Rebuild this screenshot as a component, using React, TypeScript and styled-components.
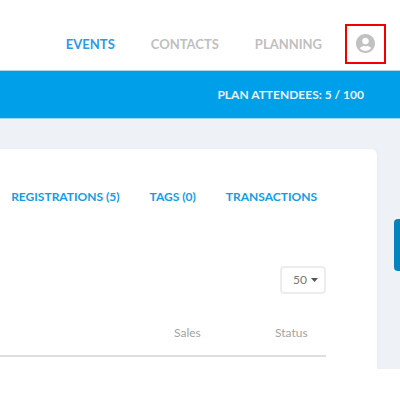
import React from "react";
import styled, { createGlobalStyle } from "styled-components";

const GlobalStyle = createGlobalStyle`
  *, *::before, *::after { box-sizing: border-box; }
  body {
    margin: 0;
    background: #ffffff;
    font-family: Lato, "Open Sans", sans-serif;
    font-size: 13px;
    overflow-x: hidden;
  }
`;

const Header = styled.header`
  display: flex;
  justify-content: flex-end;
  align-items: center;
  height: 71px;
  padding: 17px 14px 0 0;
  border-bottom: 1px solid #b5d5e6;
`;

const MainNav = styled.nav`
  display: flex;
  gap: 36px;
  margin-right: 23px;
`;

const NavLink = styled.a<{ $active?: boolean }>`
  color: ${(p) => (p.$active ? "#2d9ae6" : "#bfbfbf")};
  font-size: 13px;
  line-height: 16px;
  font-weight: 700;
  text-decoration: none;
  white-space: nowrap;
`;

const AccountButton = styled.button`
  display: flex;
  justify-content: center;
  align-items: center;
  width: 41px;
  height: 40px;
  padding: 0;
  border: 2px solid #f00000;
  background: #ffffff;
  color: #c1c1c1;
`;

const Banner = styled.div`
  display: flex;
  justify-content: flex-end;
  align-items: center;
  height: 48px;
  padding-right: 36px;
  border-bottom: 1px solid #9fd6f4;
  background: #009fe9;
  color: #e4f5fd;
  font-size: 12px;
  line-height: 16px;
  font-weight: 700;
`;

const Page = styled.main`
  display: flex;
  align-items: flex-start;
  padding-top: 30px;
  background: #eef2f7;
`;

const Card = styled.section`
  flex: 1;
  min-width: 0;
  padding: 40px 51px 12px 0;
  border-top-right-radius: 6px;
  background: #ffffff;
  box-shadow: 1px 0 3px #e6ebf2;
`;

const Tabs = styled.nav`
  display: flex;
  justify-content: flex-end;
  gap: 30px;
  padding-right: 9px;
`;

const TabLink = styled.a`
  color: #129de6;
  font-size: 12px;
  line-height: 16px;
  font-weight: 700;
  text-decoration: none;
  white-space: nowrap;
`;

const Toolbar = styled.div`
  display: flex;
  justify-content: flex-end;
  margin-top: 61px;
`;

const SelectBox = styled.div`
  position: relative;
  width: 46px;
  height: 28px;
`;

const PageSize = styled.select`
  appearance: none;
  width: 100%;
  height: 100%;
  padding: 0 0 0 11px;
  border: 2px solid #eceeee;
  border-radius: 4px;
  background: #ffffff;
  color: #777777;
  font: 400 12px/16px Lato, sans-serif;
`;

const Caret = styled.svg`
  position: absolute;
  top: 12px;
  right: 8px;
  pointer-events: none;
`;

const Table = styled.table`
  width: 100%;
  margin-top: 28px;
  border-collapse: collapse;
  table-layout: fixed;
`;

const HeadCell = styled.th<{ $width?: number }>`
  width: ${(p) => (p.$width ? `${p.$width}px` : "auto")};
  padding: 3px 0 14px;
  border-bottom: 2px solid #dfdfdf;
  color: #a3a3a3;
  font-size: 12px;
  line-height: 16px;
  font-weight: 400;
  text-align: left;
`;

const SideRail = styled.aside`
  display: flex;
  justify-content: flex-end;
  width: 23px;
  padding-top: 70px;
`;

const SideButton = styled.button`
  width: 6px;
  height: 52px;
  padding: 0;
  border: 0;
  border-radius: 4px 0 0 4px;
  background: #0484bf;
`;

export default function App() {
  return (
    <>
      <GlobalStyle />
      <Header>
        <MainNav aria-label="Main">
          <NavLink href="#events" $active>EVENTS</NavLink>
          <NavLink href="#contacts">CONTACTS</NavLink>
          <NavLink href="#planning">PLANNING</NavLink>
        </MainNav>
        <AccountButton type="button" aria-label="Account">
          <svg width="19" height="19" viewBox="0 0 496 496" aria-hidden="true">
            <path
              fill="currentColor"
              d="M248 0C111 0 0 111 0 248s111 248 248 248 248-111 248-248S385 0 248 0zm0 96c48.600 0 88 39.400 88 88s-39.400 88-88 88-88-39.400-88-88 39.400-88 88-88zm0 344c-58.700 0-111.300-26.600-146.500-68.200 18.800-35.400 55.600-59.800 98.500-59.800 2.400 0 4.800.4 7.100 1.100 13 4.200 26.600 6.900 40.900 6.900s28-2.700 40.900-6.900c2.300-.7 4.700-1.100 7.100-1.100 42.900 0 79.700 24.400 98.500 59.800C359.300 413.400 306.700 440 248 440z"
            />
          </svg>
        </AccountButton>
      </Header>
      <Banner>PLAN ATTENDEES: 5 / 100</Banner>
      <Page>
        <Card>
          <Tabs aria-label="Event sections">
            <TabLink href="#registrations">REGISTRATIONS (5)</TabLink>
            <TabLink href="#tags">TAGS (0)</TabLink>
            <TabLink href="#transactions">TRANSACTIONS</TabLink>
          </Tabs>
          <Toolbar>
            <SelectBox>
              <PageSize aria-label="Rows per page" defaultValue="50">
                <option>25</option>
                <option>50</option>
                <option>100</option>
              </PageSize>
              <Caret width="7" height="4" viewBox="0 0 7 4" aria-hidden="true">
                <path d="M0 0h7L3.500 4z" fill="#555555" />
              </Caret>
            </SelectBox>
          </Toolbar>
          <Table>
            <thead>
              <tr>
                <HeadCell as="td" />
                <HeadCell scope="col" $width={101}>Sales</HeadCell>
                <HeadCell scope="col" $width={51}>Status</HeadCell>
              </tr>
            </thead>
          </Table>
        </Card>
        <SideRail>
          <SideButton type="button" aria-label="Open side panel" />
        </SideRail>
      </Page>
    </>
  );
}
